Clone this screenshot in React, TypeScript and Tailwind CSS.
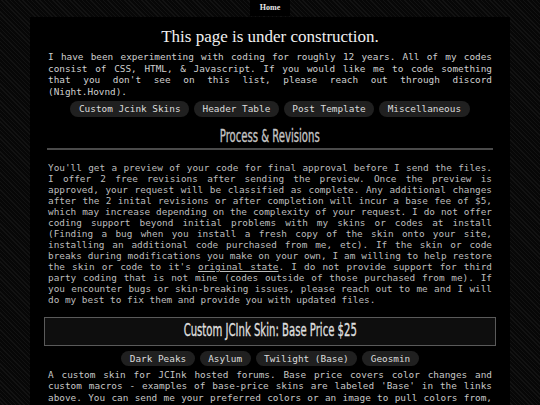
const mono = { fontFamily: '"DejaVu Sans Mono", "Liberation Mono", monospace' };

const topLinks = ['Custom Jcink Skins', 'Header Table', 'Post Template', 'Miscellaneous'];
const skins = ['Dark Peaks', 'Asylum', 'Twilight (Base)', 'Geosmin'];

function Pill({ label }: { label: string }) {
  return (
    <a className="h-[15.5px] leading-[15.5px] px-[8.5px] rounded-full bg-[#202020] text-[#dcdcdc] text-[9.4px] whitespace-nowrap cursor-pointer">
      {label}
    </a>
  );
}

function Condensed({ children, className = '' }: { children: React.ReactNode; className?: string }) {
  return (
    <span
      className={`inline-block [-webkit-text-stroke:0.35px_currentColor] font-['Liberation_Sans_Narrow','DejaVu_Sans_Condensed','Liberation_Sans',sans-serif] ${className}`}
    >
      {children}
    </span>
  );
}

export default function App() {
  return (
    <div
      className="min-h-screen bg-[repeating-linear-gradient(45deg,#121212_0px,#121212_1px,#070707_1px,#070707_3px)] text-[#c9c9c9]"
      style={mono}
    >
      {/* Top nav */}
      <nav className="flex justify-center h-[17px]">
        <a className="bg-black px-[10px] h-[16px] leading-[16px] text-[8px] font-bold text-[#e6e6e6] font-['Liberation_Serif',serif]">
          Home
        </a>
      </nav>

      {/* Main panel */}
      <main className="mx-[30px] bg-black px-[18px] pt-[8px] pb-6">
        <h1 className="text-center text-[17px] leading-[24px] text-[#f0f0f0] font-['Liberation_Serif',serif]">
          This page is under construction.
        </h1>
        <p className="text-justify text-[9.4px] leading-[11.5px] text-[#cfcfcf] mt-[2px]">
          I have been experimenting with coding for roughly 12 years. All of my codes consist of CSS, HTML, &amp;
          Javascript. If you would like me to code something that you don't see on this list, please reach out
          through discord (Night.Hovnd).
        </p>
        <div className="flex justify-center gap-[5px] mt-[4px]">
          {topLinks.map((l) => (
            <Pill key={l} label={l} />
          ))}
        </div>

        {/* Process & Revisions */}
        <h2 className="text-center mt-[8px] leading-[22px] text-[#c4c4c4]">
          <Condensed className="text-[17px] scale-x-[0.66]">Process &amp; Revisions</Condensed>
        </h2>
        <hr className="border-0 h-[2px] bg-[#4a4a4a] mt-0 -mx-[1px]" />
        <p className="text-justify text-[9.4px] leading-[11px] text-[#bdbdbd] mt-[12px]">
          You'll get a preview of your code for final approval before I send the files. I offer 2 free revisions
          after sending the preview. Once the preview is approved, your request will be classified as complete. Any
          additional changes after the 2 inital revisions or after completion will incur a base fee of $5, which may
          increase depending on the complexity of your request. I do not offer coding support beyond initial problems
          with my skins or codes at install (Finding a bug when you install a fresh copy of the skin onto your site,
          installing an additional code purchased from me, etc). If the skin or code breaks during modifications you
          make on your own, I am willing to help restore the skin or code to it's{' '}
          <a className="underline cursor-pointer">original state</a>. I do not provide support for third party coding
          that is not mine (codes outside of those purchased from me). If you encounter bugs or skin-breaking issues,
          please reach out to me and I will do my best to fix them and provide you with updated files.
        </p>

        {/* Custom skin */}
        <div className="-mx-[4px] mt-[12px] h-[29px] border border-[#5a5a5a] bg-[#0e0e0e] flex items-center justify-center text-[#dedede]">
          <Condensed className="text-[17px] scale-x-[0.66]">Custom JCInk Skin: Base Price $25</Condensed>
        </div>
        <div className="flex justify-center gap-[5px] mt-[5px]">
          {skins.map((l) => (
            <Pill key={l} label={l} />
          ))}
        </div>
        <p className="text-justify text-[9.4px] leading-[11.3px] text-[#c6c6c6] mt-[3px]">
          A custom skin for JCInk hosted forums. Base price covers color changes and custom macros - examples of
          base-price skins are labeled 'Base' in the links above. You can send me your preferred colors or an image
          to pull colors from, and I'll fill in the rest based on the vibe of your site, or you can give me full
          creative freedom to design something unique for you.
        </p>
      </main>
    </div>
  );
}
